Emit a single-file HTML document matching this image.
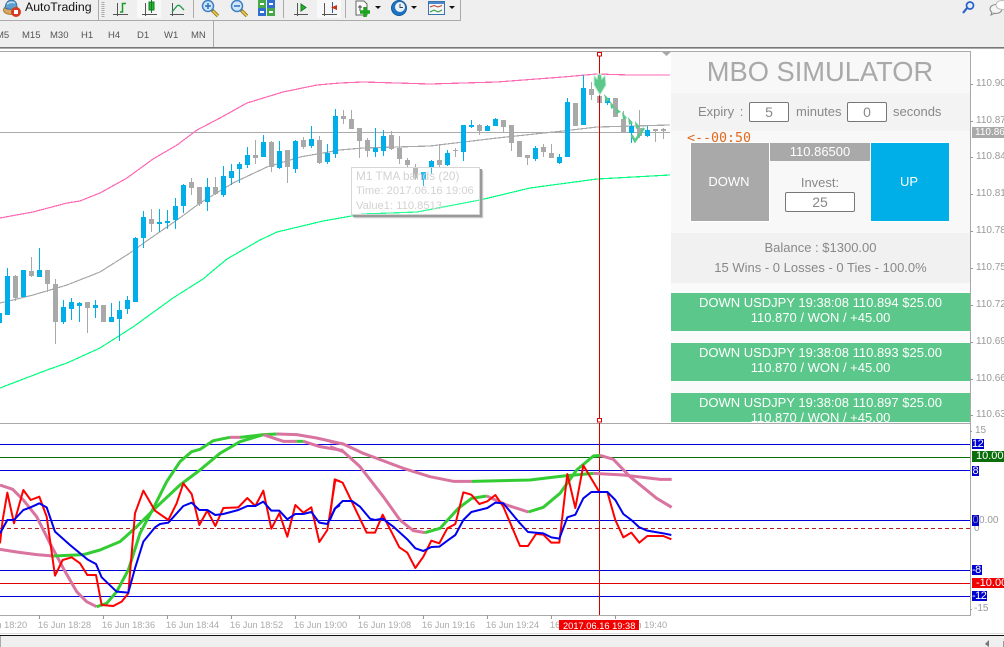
<!DOCTYPE html>
<html><head><meta charset="utf-8"><style>
html,body{margin:0;padding:0}
body{width:1004px;height:647px;overflow:hidden;background:#fff;position:relative;font-family:"Liberation Sans",sans-serif}
.t{position:absolute;white-space:nowrap}
.c{text-align:center}
.b{position:absolute}
.inp{position:absolute;background:#fff;border:1px solid #777;border-radius:2px;box-sizing:border-box;text-align:center;color:#888;font-size:14px;line-height:18px}
.row{position:absolute;left:671px;width:299px;background:#5bc78a;color:#fff;font-size:13px;line-height:15px;text-align:center;overflow:hidden;box-sizing:border-box;padding-top:2px}
.ax{position:absolute;left:976px;font-size:10px;line-height:12px;color:#999;white-space:nowrap}
.tag{position:absolute;left:972px;font-size:11px;line-height:11px;color:#fff;white-space:nowrap;box-sizing:border-box;overflow:hidden}
.m{position:absolute;top:30px;font-size:9.500px;line-height:12px;color:#555;white-space:nowrap}
svg{position:absolute;left:0;top:0}
</style></head><body>

<div class="b" style="left:0;top:0;width:1004px;height:48px;background:#efefef"></div>
<div class="b" style="left:0;top:47px;width:1004px;height:1px;background:#777"></div>
<div class="b" style="left:0;top:48px;width:1004px;height:1px;background:#aaa"></div>
<div class="b" style="left:0;top:20px;width:461px;height:1px;background:#aaa"></div>
<div class="b" style="left:460px;top:0;width:1px;height:21px;background:#aaa"></div>
<div class="b" style="left:213px;top:21px;width:1px;height:26px;background:#aaa"></div>
<div class="b" style="left:137px;top:0;width:24px;height:18px;background:#f8f8f8"></div>
<div class="b" style="left:317px;top:0;width:24px;height:18px;background:#f8f8f8"></div>

<div class="t" style="left:25px;top:0;font-size:12.300px;line-height:15px;color:#111">AutoTrading</div>
<div class="m" style="left:-4px">M5</div>
<div class="m" style="left:22px">M15</div>
<div class="m" style="left:50px">M30</div>
<div class="m" style="left:81px">H1</div>
<div class="m" style="left:108px">H4</div>
<div class="m" style="left:137px">D1</div>
<div class="m" style="left:164px">W1</div>
<div class="m" style="left:191px">MN</div>

<!-- toolbar icons -->
<svg width="1004" height="48" viewBox="0 0 1004 48">
<path d="M98.500 0V20" stroke="#aaa"/>
<path d="M103 2V17" stroke="#aaa" stroke-width="3" stroke-dasharray="1 1"/>
<path d="M193.500 0V18M283.500 0V18M345.500 0V18" stroke="#aaa"/>
<!-- auto trading -->
<ellipse cx="11" cy="10" rx="7.500" ry="4.500" fill="#d8a860" stroke="#a87a30"/>
<path d="M5 8Q6 0 12 0Q17 1 17 7Q11 11 5 8z" fill="#5e9fd0" stroke="#3a70a0"/>
<path d="M7 4Q11 1 15 3" fill="none" stroke="#bfe0f4" stroke-width="1.500"/>
<circle cx="16" cy="12" r="5" fill="#d83a22"/><rect x="14" y="10" width="4" height="4" fill="#fff"/>
<!-- chart icons -->
<g fill="none" stroke="#555">
<path d="M117.500 3V16M113 14.500H128M145.500 3V16M142 14.500H157M172.500 3V16M170 14.500H184M297.500 3V16M294 14.500H308M324.500 3V16M322 14.500H337"/>
</g>
<path d="M120 12h2.500V3.500H126" fill="none" stroke="#1a9a2a" stroke-width="1.500"/>
<rect x="149" y="2" width="5" height="8" fill="#1bbb2a" stroke="#1a7a2a"/><path d="M151.500 0V13" stroke="#1a7a2a"/>
<path d="M172 12L177 6Q179 4 182 8L184 10" fill="none" stroke="#1a9a4a" stroke-width="1.300"/>
<path d="M301 4L306 7.500L301 11z" fill="#22b522" stroke="#1a7a2a"/>
<path d="M332.500 2V13" stroke="#2a5aa0"/><path d="M331 7.500L337 5V10z" fill="#d03010"/>
<!-- zoom -->
<path d="M212 10L218 16" stroke="#9a8020" stroke-width="3.500"/><path d="M213 11L218 16" stroke="#ecd060" stroke-width="1.500"/>
<circle cx="208" cy="6" r="5.500" fill="#cfe6f7" stroke="#3a7fc8" stroke-width="1.500"/>
<path d="M205 6H211M208 3V9" stroke="#2a6fc0" stroke-width="1.500"/>
<path d="M241 10L247 16" stroke="#9a8020" stroke-width="3.500"/><path d="M242 11L247 16" stroke="#ecd060" stroke-width="1.500"/>
<circle cx="237" cy="6" r="5.500" fill="#cfe6f7" stroke="#3a7fc8" stroke-width="1.500"/>
<path d="M234 6H240" stroke="#2a6fc0" stroke-width="1.500"/>
<!-- windows -->
<rect x="258" y="0" width="8" height="8" fill="#46a846"/><rect x="267" y="0" width="8" height="8" fill="#2f6fcf"/>
<rect x="258" y="8" width="8" height="8" fill="#2f6fcf"/><rect x="267" y="8" width="8" height="8" fill="#46a846"/>
<path d="M260 4h4M269 4h4M260 12h4M269 12h4" stroke="#fff" stroke-width="2"/>
<!-- doc plus -->
<path d="M356 1h8l3 3v11h-11z" fill="#fbfbfb" stroke="#666"/><path d="M360 5v6M358 7h4" stroke="#444"/>
<path d="M365 7V17M360 12H370" stroke="#1ea51e" stroke-width="3.500"/>
<path d="M375 6h6l-3 3z" fill="#111"/>
<!-- clock -->
<circle cx="399" cy="8" r="7.500" fill="#1f73c4" stroke="#155a9a"/><circle cx="400" cy="7" r="5" fill="#e8f2fa"/>
<path d="M400 4V7.500H403" stroke="#444" fill="none"/>
<path d="M411 6h6l-3 3z" fill="#111"/>
<!-- template -->
<rect x="428.500" y="1.500" width="16" height="13" fill="#f2f6fb" stroke="#3a72b0"/><rect x="429" y="2" width="15" height="2" fill="#4a8ac8"/>
<path d="M430 7L434 5.500L438 7L442 5.500" stroke="#c04020" fill="none"/><path d="M430 12L434 10L438 12L442 10" stroke="#2a9a2a" fill="none"/>
<path d="M449 6h6l-3 3z" fill="#111"/>
<!-- search + chat -->
<circle cx="970" cy="5.500" r="3.500" fill="#e4eefb" stroke="#2a62c8" stroke-width="1.700"/><path d="M967 8L963 13" stroke="#2a62c8" stroke-width="2.200"/>
<ellipse cx="996" cy="9" rx="6" ry="4.500" fill="#f4f4f4" stroke="#888"/><path d="M992 12L991 15L995 13" fill="#f4f4f4" stroke="#888"/>
<ellipse cx="1002" cy="5" rx="6" ry="4.500" fill="#fff" stroke="#bbb"/>
</svg>

<!-- main chart -->
<svg width="1004" height="647" viewBox="0 0 1004 647" style="top:0">
<path d="M0 51.500H970.500V423" fill="none" stroke="#a9a9a9"/>
<path d="M0 132.500H670" stroke="#aaa"/>
<polyline fill="none" stroke="#ff69b4" stroke-width="1.200" shape-rendering="crispEdges" points="0,218 33,212 67,203 80,201 100,193 127,178 153,159 177,145 197,130 220,118 247,103 283,92 317,85 340,83 363,82 430,84 497,82 563,77 597,74 630,75 670,75"/>
<polyline fill="none" stroke="#00ff7f" stroke-width="1.200" shape-rendering="crispEdges" points="0,388 47,370 67,363 100,348 133,327 173,298 203,279 227,259 260,240 277,232 323,221 363,214 417,212 480,200 530,188 597,179 670,175"/>
<polyline fill="none" stroke="#a9a9a9" stroke-width="1.200" shape-rendering="crispEdges" points="0,303 13,300 33,295 67,285 100,272 130,253 148,240 177,220 200,203 233,183 267,167 300,157 340,150 363,148 430,146 497,138 563,131 597,127 670,125"/>
<g fill="none" stroke="#00aeea" shape-rendering="crispEdges">
<path stroke-width="1" d="M7.500 268V315M23.500 270V297M39.500 248V277M63.500 300V324M71.500 298V320M79.500 302V322M95.500 300V318M111.500 303V322M119.500 301V341M127.500 296V314M135.500 237V302M143.500 211V248M159.500 209V232M167.500 210V229M175.500 198V229M183.500 184V213M207.500 178V211M223.500 166V197M231.500 164V185M239.500 162V183M247.500 147V168M263.500 135V157M279.500 141V169M295.500 140V173M311.500 126V148M327.500 144V164M335.500 109V158M375.500 128V157M383.500 130V156M423.500 172V186M431.500 160V174M447.500 150V166M463.500 125V161M471.500 120V128M487.500 125V131M495.500 118V126M535.500 146V161M559.500 154V164M567.500 98V157M583.500 75V125M607.500 98V105M631.500 123V143M647.500 126V137"/>
<path stroke-width="5" d="M-0.500 313V323M7.500 276V315M23.500 270V297M39.500 270V277M63.500 307V322M71.500 302V309M79.500 303V306M95.500 305V308M111.500 317V322M119.500 310V319M127.500 300V309M135.500 238V302M143.500 217V238M159.500 222V224M167.500 221V223M175.500 206V220M183.500 185V206M207.500 187V202M223.500 176V195M231.500 171V178M239.500 164V169M247.500 155V165M263.500 142V157M279.500 151V168M295.500 141V169M311.500 139V146M327.500 153V162M335.500 116V154M375.500 148V152M383.500 136V151M423.500 172V180M431.500 161V167M447.500 153V165M463.500 125V152M471.500 125V127M487.500 126V131M495.500 119V126M535.500 148V159M559.500 157V163M567.500 102V157M583.500 88V125M607.500 98V103M631.500 126V133M647.500 130V136"/>
</g>
<g fill="none" stroke="#a9a9a9" shape-rendering="crispEdges">
<path stroke-width="1" d="M15.500 275V301M31.500 257V277M47.500 270V292M55.500 279V344M87.500 302V333M103.500 305V322M151.500 209V232M191.500 178V195M199.500 187V206M215.500 177V195M255.500 140V164M271.500 141V172M287.500 150V183M303.500 137V149M319.500 136V164M343.500 110V124M351.500 110V129M359.500 128V158M367.500 138V157M391.500 131V150M399.500 136V164M407.500 158V168M415.500 164V180M439.500 144V168M455.500 148V157M479.500 124V135M503.500 120V132M511.500 125V151M519.500 141V157M527.500 155V165M543.500 144V157M551.500 144V158M575.500 103V126M591.500 82V100M599.500 95V105M615.500 98V117M623.500 111V133M639.500 110V138M655.500 129V142M663.500 128V139"/>
<path stroke-width="5" d="M15.500 276V298M31.500 271V276M47.500 270V284M55.500 284V322M87.500 302V308M103.500 305V322M151.500 219V224M191.500 182V188M199.500 187V204M215.500 187V194M255.500 155V158M271.500 142V167M287.500 150V167M303.500 140V147M319.500 140V163M343.500 116V119M351.500 119V129M359.500 128V141M367.500 140V151M391.500 135V149M399.500 148V159M407.500 160V165M415.500 168V178M439.500 160V165M455.500 150V151M479.500 125V131M503.500 120V127M511.500 125V143M519.500 141V157M527.500 155V158M543.500 147V152M551.500 153V158M575.500 103V126M591.500 89V95M599.500 96V103M615.500 98V117M623.500 119V133M639.500 128V136M655.500 129V131M663.500 129V131"/>
</g>
<!-- vertical cross line -->
<path d="M599.500 56V420" stroke="#d40000" shape-rendering="crispEdges"/>
<rect x="597.500" y="52.500" width="4" height="3.500" fill="#fff" stroke="#e00000"/>
<rect x="597.500" y="418.500" width="4" height="3.500" fill="#fff" stroke="#e00000"/>
<path d="M661 51h11l-5.500 5z" fill="#a9a9a9"/>
<!-- arrows -->
<path d="M594 75L597 79L598 74H601L602 79L605 75L606 85L600 95L594 85z" fill="#5bc78a" stroke="#c6f0d8"/>
<g fill="#5bc78a">
<path d="M604 94L610 100L606 102z"/><path d="M610 101L615 107L611 109z"/><path d="M615 107L621 112L616 114z"/><path d="M622 112L627 118L623 120z"/><path d="M628 117L633 123L629 125z"/><path d="M635 121L640 127L636 129z"/>
</g>
<path d="M631.500 135L635 141L644 128" fill="none" stroke="#5bc78a" stroke-width="2.500"/>
</svg>

<!-- tooltip -->
<div class="b" style="left:351px;top:167px;width:129px;height:48px;box-sizing:border-box;background:rgba(255,255,255,.15);border:1px solid #d6d6d6;box-shadow:2px 2px 0 #999,3px 3px 1px #bbb"></div>
<div class="t" style="left:356px;top:169px;font-size:11.800px;line-height:14px;color:#d2d2d2">M1 TMA bands (20)</div>
<div class="t" style="left:356px;top:184px;font-size:11.200px;line-height:14px;color:#d2d2d2">Time: 2017.06.16 19:06</div>
<div class="t" style="left:356px;top:199px;font-size:11.200px;line-height:14px;color:#d2d2d2">Value1: 110.8513</div>

<!-- panel -->
<div class="b" style="left:671px;top:52px;width:299px;height:370px;background:#f8f8f8"></div>
<div class="b" style="left:671px;top:93px;width:299px;height:38px;background:#f3f3f3"></div>
<div class="b" style="left:671px;top:233px;width:299px;height:50px;background:#f1f1f1"></div>
<div class="b" style="left:671px;top:283px;width:299px;height:140px;background:#fafafa"></div>
<div class="t c" style="left:671px;width:298px;top:56px;font-size:27.300px;line-height:32px;color:#a9a9a9">MBO SIMULATOR</div>
<div class="t" style="left:698px;top:104px;font-size:13px;line-height:15px;color:#888;word-spacing:2px">Expiry :</div>
<div class="inp" style="left:749px;top:102px;width:40px;height:20px">5</div>
<div class="t" style="left:796px;top:104px;font-size:13px;line-height:15px;color:#888">minutes</div>
<div class="inp" style="left:847px;top:102px;width:40px;height:20px">0</div>
<div class="t" style="left:893px;top:104px;font-size:13px;line-height:15px;color:#888">seconds</div>
<div class="t" style="left:687px;top:131px;font-family:'DejaVu Sans Mono',monospace;font-size:13.300px;line-height:16px;color:#e2691d">&lt;--00:50</div>
<div class="b" style="left:690px;top:142px;width:80px;height:80px;background:#fff"></div>
<div class="b" style="left:870px;top:142px;width:80px;height:80px;background:#fff"></div>
<div class="b c" style="left:691px;top:143px;width:76px;height:78px;background:#a9a9a9;color:#fff;font-size:13px;line-height:78px;padding-right:2px">DOWN</div>
<div class="b c" style="left:871px;top:143px;width:76px;height:78px;background:#00aee8;color:#fff;font-size:13px;line-height:78px;padding-right:2px">UP</div>
<div class="b c" style="left:770px;top:143px;width:100px;height:18px;background:#a9a9a9;color:#fff;font-size:13px;line-height:18px">110.86500</div>
<div class="t c" style="left:770px;width:100px;top:175px;font-size:13px;line-height:15px;color:#888">Invest:</div>
<div class="inp" style="left:785px;top:192px;width:70px;height:20px">25</div>
<div class="t c" style="left:671px;width:299px;top:240px;font-size:13px;line-height:15px;color:#888">Balance : $1300.00</div>
<div class="t c" style="left:671px;width:299px;top:260px;font-size:13px;line-height:15px;color:#888">15 Wins - 0 Losses - 0 Ties - 100.0%</div>
<div class="row" style="top:293px;height:38px;padding-top:2px">DOWN USDJPY 19:38:08 110.894 $25.00<br>110.870 / WON / +45.00</div>
<div class="row" style="top:343px;height:38px;padding-top:2px">DOWN USDJPY 19:38:08 110.893 $25.00<br>110.870 / WON / +45.00</div>
<div class="row" style="top:393px;height:29px;padding-top:2px">DOWN USDJPY 19:38:08 110.897 $25.00<br>110.870 / WON / +45.00</div>

<!-- axis main -->
<svg width="1004" height="647" viewBox="0 0 1004 647">
<path d="M970 84.500h3M970 121.500h3M970 157.500h3M970 194.500h3M970 231.500h3M970 268.500h3M970 305.500h3M970 342.500h3M970 379.500h3M970 415.500h3" stroke="#999"/>
</svg>
<div class="ax" style="top:78px">110.90</div>
<div class="ax" style="top:115px">110.87</div>
<div class="ax" style="top:151px">110.84</div>
<div class="ax" style="top:188px">110.81</div>
<div class="ax" style="top:225px">110.78</div>
<div class="ax" style="top:262px">110.75</div>
<div class="ax" style="top:299px">110.72</div>
<div class="ax" style="top:336px">110.69</div>
<div class="ax" style="top:373px">110.66</div>
<div class="ax" style="top:409px">110.63</div>
<div class="tag" style="top:127px;width:32px;height:11px;background:#a9a9a9;font-size:10px;padding-left:3px">110.86</div>

<!-- sub window -->
<svg width="1004" height="647" viewBox="0 0 1004 647">
<rect x="0" y="423" width="970" height="192" fill="#fff"/>
<path d="M0 423.500H970.500V615.500H0" fill="none" stroke="#a9a9a9"/>
<path d="M0 444.500H970M0 470.500H970M0 520.500H970M0 570.500H970M0 596.500H970" stroke="#0000d8"/>
<path d="M0 457.500H970" stroke="#0a6e0a"/>
<path d="M0 583.500H970" stroke="#e00000"/>
<path d="M0 528.500H970" stroke="#b02020" stroke-dasharray="4 3"/>
<path d="M599.500 423V615" stroke="#d40000" shape-rendering="crispEdges"/>
<g fill="none" stroke-linejoin="round" transform="translate(0,420) scale(.33333)">
<polyline stroke="#d9739f" stroke-width="9" points="0,195 38,208 70,240 110,290 150,370 190,445 230,515 260,545 290,560"/>
<polyline stroke="#d9739f" stroke-width="9" points="0,388 50,396 110,404 160,408"/>
<polyline stroke="#33cc33" stroke-width="9" points="160,408 250,404 300,390 360,365 410,320 460,270 540,195 600,150 660,100 720,65 790,44 830,42"/>
<polyline stroke="#33cc33" stroke-width="9" points="290,560 320,550 350,515 385,450 420,340 460,265 500,185 540,125 575,95 600,88 640,62 690,52"/>
<polyline stroke="#d9739f" stroke-width="9" points="690,52 720,52"/>
<polyline stroke="#33cc33" stroke-width="9" points="720,52 790,44"/>
<polyline stroke="#d9739f" stroke-width="9" points="790,44 850,64 890,64"/>
<polyline stroke="#33cc33" stroke-width="9" points="890,64 910,64"/>
<polyline stroke="#d9739f" stroke-width="9" points="910,64 960,80 1020,90 1030,91"/>
<polyline stroke="#d9739f" stroke-width="9" points="830,42 890,44 950,54 1020,70 1030,72"/>
<polyline stroke="#ff0000" stroke-width="6" points="0,370 8,300 22,218 42,310 70,210 92,240 118,230 140,290 165,467 188,420 215,412 240,430 262,465 288,465 305,555 340,558 365,545 385,520 405,280 430,212 465,272 505,300 530,250 550,190 575,222 598,315 622,272 646,318 670,264 715,262 742,234 766,258 790,212 814,326 838,280 862,350 886,255 910,278 934,262 958,366 982,330 1006,180 1020,184"/>
<polyline stroke="#0000ee" stroke-width="6" points="0,340 22,300 42,300 70,270 92,262 118,250 140,262 165,335 210,375 262,418 288,432 305,472 350,515 385,518 405,445 430,365 465,322 480,312 505,308 550,258 575,248 598,270 622,270 646,285 670,282 715,270 742,258 766,258 790,245 814,272 838,272 862,298 886,282 910,282 934,276 958,308 982,312 1006,265 1020,255"/>
</g>
<g fill="none" stroke-linejoin="round" transform="translate(330,420) scale(.33333)">
<polyline stroke="#d9739f" stroke-width="9" points="0,65 40,72 100,100 220,145 300,170 370,184 425,184"/>
<polyline stroke="#33cc33" stroke-width="9" points="425,184 600,180 700,168 790,160"/>
<polyline stroke="#d9739f" stroke-width="9" points="790,160 880,165 990,178 1025,178"/>
<polyline stroke="#d9739f" stroke-width="9" points="0,80 40,95 90,140 160,230 210,300 250,332 285,338"/>
<polyline stroke="#33cc33" stroke-width="9" points="285,338 330,325 385,265 425,235 470,228"/>
<polyline stroke="#d9739f" stroke-width="9" points="470,228 530,255 595,276"/>
<polyline stroke="#33cc33" stroke-width="9" points="595,276 640,262 690,220 740,150 790,108 810,106"/>
<polyline stroke="#d9739f" stroke-width="9" points="810,106 850,118 900,170 980,235 1025,262"/>
<polyline stroke="#ff0000" stroke-width="6" points="0,290 14,178 38,188 110,338 135,338 158,284 208,382 232,398 256,444 280,410 304,362 328,370 352,325 376,312 400,217 424,224 448,252 472,244 496,225 520,260 570,378 594,378 618,342 640,344 664,368 688,368 712,162 736,264 760,136 808,216 832,216 856,300 880,352 904,338 928,368 952,348 1000,348 1024,358"/>
<polyline stroke="#0000ee" stroke-width="6" points="0,300 14,266 38,243 66,243 90,260 120,296 135,300 158,296 190,320 232,358 256,385 280,393 304,381 328,380 352,362 376,345 400,300 424,276 472,264 496,248 520,250 570,310 594,336 640,340 664,352 688,356 712,292 736,284 760,235 784,216 832,216 856,240 880,282 904,300 928,322 952,332 1000,340 1024,345"/>
</g>
<path d="M39.500 615v4M103.500 615v4M167.500 615v4M231.500 615v4M295.500 615v4M359.500 615v4M423.500 615v4M487.500 615v4M551.500 615v4M615.500 615v4" stroke="#999"/>
<g font-family="Liberation Sans, sans-serif" font-size="9.200" fill="#aaa">
<text x="-26" y="628">16 Jun 18:20</text>
<text x="38" y="628">16 Jun 18:28</text>
<text x="102" y="628">16 Jun 18:36</text>
<text x="166" y="628">16 Jun 18:44</text>
<text x="230" y="628">16 Jun 18:52</text>
<text x="294" y="628">16 Jun 19:00</text>
<text x="358" y="628">16 Jun 19:08</text>
<text x="422" y="628">16 Jun 19:16</text>
<text x="486" y="628">16 Jun 19:24</text>
<text x="550" y="628">16 Jun 19:32</text>
<text x="614" y="628">16 Jun 19:40</text>
</g>
<rect x="559" y="620" width="80" height="10" fill="#f00000"/>
<text x="563" y="629" font-family="Liberation Sans, sans-serif" font-size="9.300" fill="#fff">2017.06.16 19:38</text>
<path d="M970 431.500h2M970 609.500h2" stroke="#999"/>
</svg>

<div class="ax" style="top:425px;left:975px">15</div>
<div class="ax" style="top:515px;left:979px">0.00</div>
<div class="ax" style="top:523px;left:974px">0</div>
<div class="ax" style="top:603px;left:974px">-15</div>
<div class="tag" style="top:439px;width:12px;height:10px;background:#0000d0;line-height:10px;letter-spacing:-.5px">12</div>
<div class="tag" style="top:451px;width:32px;height:11px;background:#0a6e0a;padding-left:4px">10.000</div>
<div class="tag" style="top:466px;width:7px;height:10px;background:#0000d0;line-height:10px;padding-left:.5px">8</div>
<div class="tag" style="top:515px;width:7px;height:11px;background:#0000d0;color:#88a;padding-left:.5px">0</div>
<div class="tag" style="top:565px;width:10px;height:10px;background:#0000d0;line-height:10px;letter-spacing:-.5px">-8</div>
<div class="tag" style="top:578px;width:32px;height:10px;background:#f00000;line-height:10px;padding-left:4px">-10.000</div>
<div class="tag" style="top:591px;width:15px;height:10px;background:#0000d0;line-height:10px;letter-spacing:-.5px">-12</div>

<!-- bottom -->
<div class="b" style="left:0;top:633px;width:1004px;height:1px;background:#ddd"></div>
<div class="b" style="left:0;top:635px;width:1004px;height:1px;background:#111"></div>
<div class="b" style="left:0;top:636px;width:1004px;height:11px;background:#efefef"></div>
<div class="b" style="left:0;top:636px;width:1px;height:11px;background:#aaa"></div>
<svg width="1004" height="647" viewBox="0 0 1004 647"><path d="M985 644L989 640V647z" fill="#777"/><path d="M1003.500 641V647" stroke="#999"/></svg>
</body></html>
